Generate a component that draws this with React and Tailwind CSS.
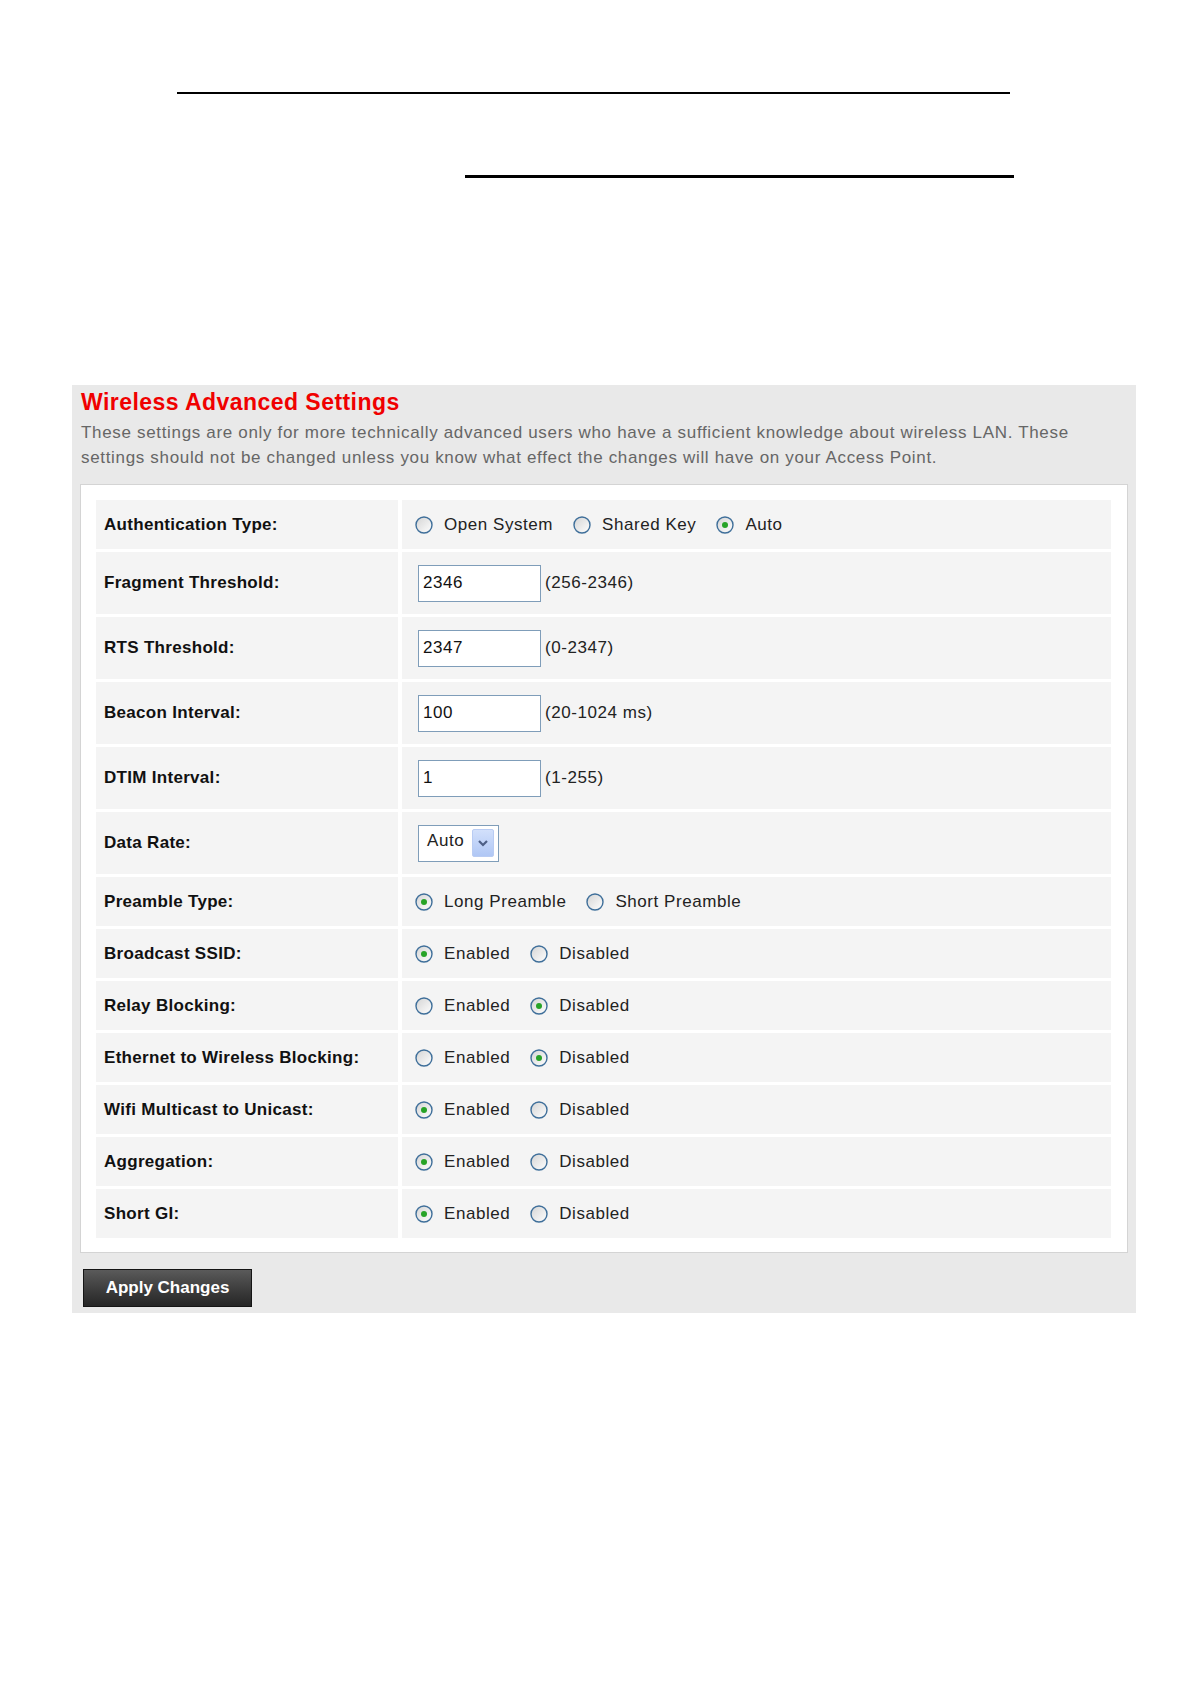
import React from "react";

function Radio({ checked }) {
  return (
    <svg width="18" height="18" viewBox="0 0 18 18" className="shrink-0">
      <defs>
        <linearGradient id="rg" x1="0" y1="0" x2="1" y2="1">
          <stop offset="0" stopColor="#d4d4d4" />
          <stop offset="1" stopColor="#ffffff" />
        </linearGradient>
      </defs>
      <circle cx="9" cy="9" r="8" fill="url(#rg)" stroke="#3f6f9a" strokeWidth="1.4" />
      {checked && <circle cx="9" cy="9" r="3" fill="#27a327" />}
    </svg>
  );
}

function RadioGroup({ options, selected }) {
  return (
    <div className="flex items-center gap-[20px]">
      {options.map((o, i) => (
        <div key={o} className="flex items-center gap-[11px]">
          <Radio checked={i === selected} />
          <span>{o}</span>
        </div>
      ))}
    </div>
  );
}

function TextBox({ value, hint }) {
  return (
    <div className="flex items-center ml-[3px]">
      <div className="w-[123px] h-[37px] border border-[#7f9db9] bg-white flex items-center pl-[4px] text-[#111]">
        {value}
      </div>
      <span className="ml-[4px]">{hint}</span>
    </div>
  );
}

function SelectBox() {
  return (
    <div className="ml-[3px] w-[81px] h-[37px] border border-[#7f9db9] bg-white flex items-center justify-between pl-[8px] pr-[4px]">
      <span className="-mt-[4px]">Auto</span>
      <div className="w-[22px] h-[28px] rounded-[2px] bg-gradient-to-b from-[#d2e0fb] to-[#b0c7f5] border border-[#b9ccf3] flex items-center justify-center">
        <svg width="12" height="8" viewBox="0 0 12 8">
          <path d="M2 2 L6 6 L10 2" fill="none" stroke="#4d5f86" strokeWidth="2.2" />
        </svg>
      </div>
    </div>
  );
}

const rows = [
  { label: "Authentication Type:", h: "h-[49px]", v: <RadioGroup options={["Open System", "Shared Key", "Auto"]} selected={2} /> },
  { label: "Fragment Threshold:", h: "h-[62px]", v: <TextBox value="2346" hint="(256-2346)" /> },
  { label: "RTS Threshold:", h: "h-[62px]", v: <TextBox value="2347" hint="(0-2347)" /> },
  { label: "Beacon Interval:", h: "h-[62px]", v: <TextBox value="100" hint="(20-1024 ms)" /> },
  { label: "DTIM Interval:", h: "h-[62px]", v: <TextBox value="1" hint="(1-255)" /> },
  { label: "Data Rate:", h: "h-[62px]", v: <SelectBox /> },
  { label: "Preamble Type:", h: "h-[49px]", v: <RadioGroup options={["Long Preamble", "Short Preamble"]} selected={0} /> },
  { label: "Broadcast SSID:", h: "h-[49px]", v: <RadioGroup options={["Enabled", "Disabled"]} selected={0} /> },
  { label: "Relay Blocking:", h: "h-[49px]", v: <RadioGroup options={["Enabled", "Disabled"]} selected={1} /> },
  { label: "Ethernet to Wireless Blocking:", h: "h-[49px]", v: <RadioGroup options={["Enabled", "Disabled"]} selected={1} /> },
  { label: "Wifi Multicast to Unicast:", h: "h-[49px]", v: <RadioGroup options={["Enabled", "Disabled"]} selected={0} /> },
  { label: "Aggregation:", h: "h-[49px]", v: <RadioGroup options={["Enabled", "Disabled"]} selected={0} /> },
  { label: "Short GI:", h: "h-[49px]", v: <RadioGroup options={["Enabled", "Disabled"]} selected={0} /> },
];

export default function App() {
  return (
    <div className="w-[1191px] h-[1685px] bg-white font-['Liberation_Sans',Arial,sans-serif] pt-[92px]">
      <div className="ml-[177px] w-[833px] h-[2px] bg-black" />
      <div className="mt-[81px] ml-[465px] w-[549px] h-[3px] bg-black" />

      <div className="mt-[207px] ml-[72px] w-[1064px] bg-[#e9e9e9] pt-[4px] pb-[6px]">
        <div className="pl-[9px] text-[23px] leading-[26px] font-bold text-[#f00000] tracking-[0.45px]">
          Wireless Advanced Settings
        </div>
        <div className="mt-[5px] pl-[9px] text-[17px] leading-[25px] text-[#666666] tracking-[0.67px] whitespace-nowrap">
          These settings are only for more technically advanced users who have a sufficient knowledge about wireless LAN. These
          <br />
          settings should not be changed unless you know what effect the changes will have on your Access Point.
        </div>

        <div className="mt-[14px] mx-[8px] bg-white border border-[#d4d4d4] pl-[15px] pr-[16px] pt-[15px] pb-[14px]">
          <div className="grid grid-cols-[302px_1fr] gap-x-[4px] gap-y-[3px]">
            {rows.map((r) => (
              <React.Fragment key={r.label}>
                <div className={`${r.h} bg-[#f4f4f4] flex items-center pl-[8px] text-[17px] font-bold text-[#111] tracking-[0.3px]`}>
                  {r.label}
                </div>
                <div className={`${r.h} bg-[#f4f4f4] flex items-center pl-[13px] text-[17px] text-[#222] tracking-[0.55px]`}>
                  {r.v}
                </div>
              </React.Fragment>
            ))}
          </div>
        </div>

        <button className="mt-[16px] ml-[11px] w-[169px] h-[38px] border border-[#151515] bg-gradient-to-b from-[#5a5a5a] to-[#262626] text-white text-[17px] font-bold flex items-center justify-center">
          Apply Changes
        </button>
      </div>
    </div>
  );
}
